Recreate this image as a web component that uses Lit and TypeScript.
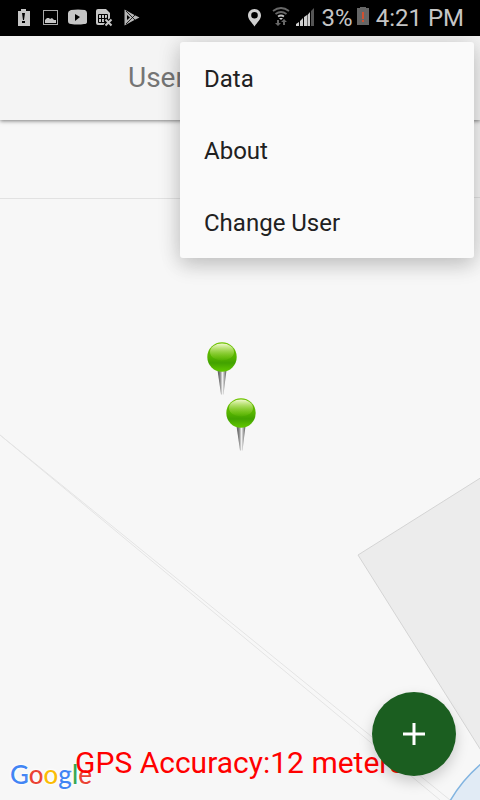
import { LitElement, html, svg, css } from "lit";
import { customElement, property } from "lit/decorators.js";

@customElement("status-bar")
class StatusBar extends LitElement {
  static styles = css`
    :host {
      display: flex;
      justify-content: space-between;
      align-items: center;
      height: 36px;
      padding: 0 16px;
      background: #000;
      color: #c6c6c6;
      font: 24px/36px Roboto, sans-serif;
    }
    .group {
      display: flex;
      align-items: center;
    }
    svg {
      display: block;
      flex: none;
    }
    .percent {
      margin: 0 4px 0 8px;
    }
    .clock {
      margin-left: 6px;
    }
  `;

  render() {
    return html`
      <div class="group">
        <svg width="126" height="36" viewBox="16 0 126 36" aria-hidden="true">
          <path fill="#c6c6c6" d="M21 9h5v2h4v15H18V11h3z" />
          <path fill="#000" d="M22 13h3l-1 7h-1zM22 21h3v2h-3z" />
          <rect x="43.5" y="10.5" width="14" height="14" fill="none" stroke="#a8a8a8" />
          <path fill="#c6c6c6" d="M45 23v-3l2-2h2l1 1 2-1 2 2h2v3z" />
          <path fill="#c6c6c6" d="M71 10q7-1 14 0 2 1 2 3v9q0 2-3 2-6 1-13 0-3 0-3-3v-8q0-2 3-3z" />
          <path fill="#000" d="M75 14l5 3-5 4z" />
          <path fill="#c6c6c6" d="M98 9h8l4 4v7h-3v5H98q-2 0-2-2V11q0-2 2-2z" />
          <path fill="none" stroke="#000" d="M98.500 14.500h9v8h-9zM98.500 18.500h9M101.500 14.500v8M104.500 14.500v8" />
          <path fill="none" stroke="#000" stroke-width="4" d="M105 19l7 7M112 19l-7 7" />
          <path fill="none" stroke="#c6c6c6" stroke-width="2" d="M105.500 19.500l6 6M111.500 19.500l-6 6" />
          <path fill="#b4b4b4" d="M124.500 9.500l9 5 6 3-6 3-9 5z" />
          <path fill="none" stroke="#000" stroke-width=".8" d="M126 11l9 9M126 24l9-9" />
          <path fill="#000" d="M127 15l3 2.500-3 2.500z" />
        </svg>
      </div>
      <div class="group">
        <svg width="67" height="36" viewBox="248 0 67 36" aria-hidden="true">
          <path fill="#d0d0d0" fill-rule="evenodd" d="M255.500 9c4 0 6.500 3 6.500 6.500 0 4-4 7-6.500 11-2.500-4-6.500-7-6.500-11C249 12 251.500 9 255.500 9zm0 3a3.300 3.300 0 100 6.600 3.300 3.300 0 000-6.600z" />
          <g fill="none" stroke="#686868" stroke-width="1.800">
            <path d="M274 11q8-6 16 0" />
            <path d="M276.500 14q5.500-4 11 0" />
            <path stroke="#c0c0c0" d="M279 16.500q3-2 6 0" />
          </g>
          <path fill="#d0d0d0" d="M280 18h4l-2 2z" />
          <path fill="#686868" d="M278 20h2v3h2l-3 3-3-3h2zM284 25h2v-3h2l-3-3-3 3h2z" />
          <path fill="#d0d0d0" d="M297 26v-2l3-2v4zM301 26v-5l3-3v8zM305 26v-9l3-2v11zM308.500 26V15l2.500-3v14z" />
          <path fill="#555" d="M312 26V11l3-3v18z" />
        </svg>
        <span class="percent">3%</span>
        <svg width="13" height="36" viewBox="358 0 13 36" aria-hidden="true">
          <path fill="#666" d="M361 7h6v1h3v17h-12V8h3z" />
          <path fill="#d05030" d="M363 12h2v7h-2zM363 20h2v2h-2z" />
        </svg>
        <span class="clock">4:21 PM</span>
      </div>
    `;
  }
}

const pins = [
  { x: 222, y: 237 },
  { x: 241, y: 293 },
];

@customElement("map-view")
class MapView extends LitElement {
  @property() accuracy = "";

  static styles = css`
    :host {
      display: flex;
      position: relative;
      align-items: flex-end;
      justify-content: center;
      background: #f7f7f7;
      overflow: hidden;
      font-family: Roboto, sans-serif;
    }
    .canvas {
      position: absolute;
      inset: 0;
      width: 100%;
      height: 100%;
    }
    .accuracy {
      position: relative;
      margin: 0 0 18px;
      font-size: 30px;
      line-height: 38px;
      color: #f00;
    }
    .logo {
      position: absolute;
      left: 10px;
      bottom: 8px;
      font: 500 26px/36px Lato, sans-serif;
      text-decoration: none;
      text-shadow: 0 0 2px #fff, 0 0 3px #fff, 0 0 4px #fff;
    }
    .blue {
      color: #4285f4;
    }
    .red {
      color: #ea4335;
    }
    .yellow {
      color: #fbbc05;
    }
    .green {
      color: #34a853;
    }
  `;

  render() {
    return html`
      <svg class="canvas" viewBox="0 0 480 680" preserveAspectRatio="xMidYMax slice" role="img" aria-label="Map">
        <defs>
          <linearGradient id="ball" x2="0" y2="1">
            <stop offset="0" stop-color="#6fc400" />
            <stop offset=".5" stop-color="#56b400" />
            <stop offset=".7" stop-color="#42a200" />
            <stop offset="1" stop-color="#62c800" />
          </linearGradient>
          <linearGradient id="gloss" x2="0" y2="1">
            <stop offset="0" stop-color="#f2fad0" />
            <stop offset="1" stop-color="#8fd020" stop-opacity=".1" />
          </linearGradient>
          <linearGradient id="spike">
            <stop offset="0" stop-color="#555" />
            <stop offset=".3" stop-color="#888" />
            <stop offset=".55" stop-color="#f2f2f2" />
            <stop offset="1" stop-color="#555" />
          </linearGradient>
        </defs>
        <path d="M0 78.500H240M240 77.500H480" stroke="#e2e2e2" />
        <path d="M0 315L340 591 450 680M0 315L340 597 440 680" fill="none" stroke="#e4e4e4" />
        <path d="M482 357L358 435 482 632z" fill="#ececec" stroke="#d4d4d4" />
        <path d="M450 681Q462 660 482 643V681z" fill="#e1ebf5" stroke="#82b4e0" stroke-width="1.500" />
        ${pins.map(
          (p) => svg`
            <g transform="translate(${p.x} ${p.y})">
              <path d="M-4.500 13h9L1.500 37.500H-1z" fill="url(#spike)" />
              <circle r="14.700" fill="url(#ball)" />
              <ellipse cy="-5" rx="12" ry="8.500" fill="url(#gloss)" />
            </g>`,
        )}
      </svg>
      <a class="logo" href="#" aria-label="Google"
        ><span class="blue">G</span><span class="red">o</span><span class="yellow">o</span
        ><span class="blue">g</span><span class="green">l</span><span class="red">e</span></a
      >
      <p class="accuracy">GPS Accuracy:${this.accuracy}</p>
    `;
  }
}

@customElement("app-root")
class AppRoot extends LitElement {
  static styles = css`
    :host {
      display: flex;
      flex-direction: column;
      position: relative;
      min-height: 100vh;
      background: #f7f7f7;
      font-family: Roboto, sans-serif;
    }
    .bar {
      position: relative;
      z-index: 1;
      display: flex;
      align-items: center;
      height: 84px;
      padding: 0 128px;
      background: #f4f4f4;
      box-shadow: 0 1px 4px rgba(0, 0, 0, 0.5);
    }
    .title {
      margin: 0;
      font-size: 28px;
      font-weight: 400;
      line-height: 36px;
      color: #757575;
    }
    .map {
      flex: 1;
    }
    .menu {
      position: absolute;
      z-index: 2;
      top: 42px;
      right: 6px;
      width: 294px;
      border-radius: 3px;
      background: #fafafa;
      box-shadow: 0 8px 20px rgba(0, 0, 0, 0.16), 0 0 24px rgba(0, 0, 0, 0.12);
    }
    .item {
      display: block;
      width: 100%;
      height: 72px;
      padding: 2px 24px 0;
      border: 0;
      background: none;
      font: 24px/36px Roboto, sans-serif;
      text-align: left;
      color: #212121;
    }
    .add {
      position: absolute;
      right: 24px;
      bottom: 24px;
      display: grid;
      place-items: center;
      width: 84px;
      height: 84px;
      padding: 0;
      border: 0;
      border-radius: 50%;
      background: #1b5e20;
      box-shadow: 0 6px 14px rgba(0, 0, 0, 0.18);
    }
  `;

  render() {
    return html`
      <status-bar></status-bar>
      <header class="bar"><h1 class="title">User</h1></header>
      <map-view class="map" accuracy="12 meters"></map-view>
      <nav class="menu" role="menu">
        ${["Data", "About", "Change User"].map(
          (label) => html`<button class="item" role="menuitem">${label}</button>`,
        )}
      </nav>
      <button class="add" aria-label="Add">
        <svg width="22" height="22" viewBox="0 0 22 22" aria-hidden="true">
          <path d="M11 0v22M0 11h22" stroke="#fff" stroke-width="3" />
        </svg>
      </button>
    `;
  }
}
